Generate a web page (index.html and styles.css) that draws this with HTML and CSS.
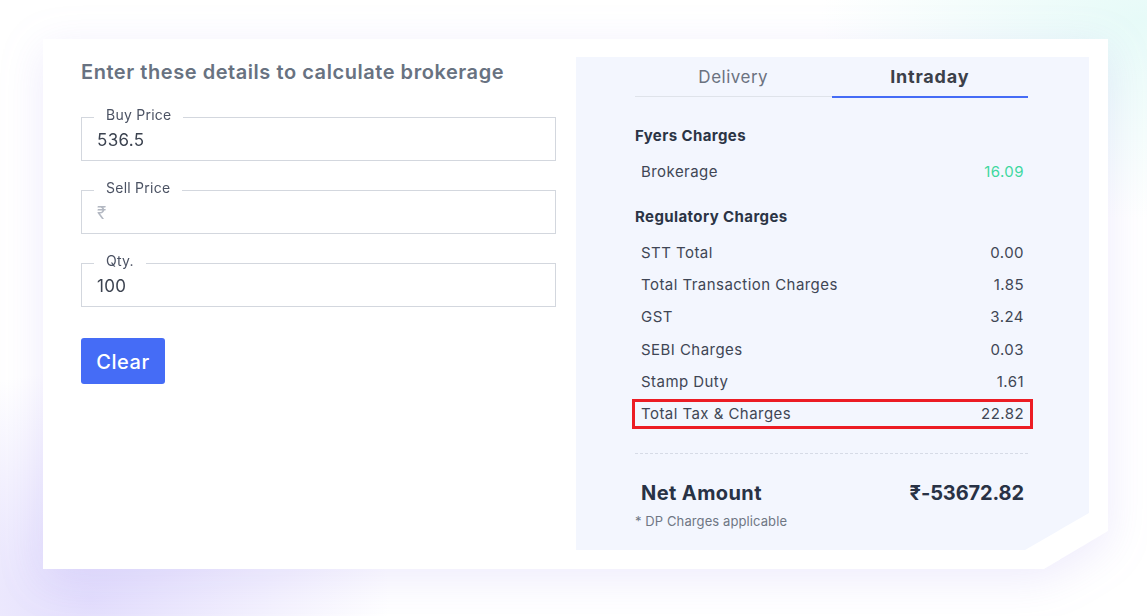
FILE: index.html
```html
<!DOCTYPE html>
<html lang="en">
<head>
<meta charset="utf-8">
<title>Brokerage Calculator</title>
<link rel="stylesheet" href="styles.css">
</head>
<body>
<div class="page">
  <div class="card-wrap">
    <div class="card">
      <section class="form-col">
        <h2 class="form-title">Enter these details to calculate brokerage</h2>
        <fieldset class="field">
          <legend>Buy Price</legend>
          <input class="field-input" type="text" value="536.5">
        </fieldset>
        <fieldset class="field">
          <legend>Sell Price</legend>
          <input class="field-input" type="text" placeholder="₹">
        </fieldset>
        <fieldset class="field">
          <legend>Qty.</legend>
          <input class="field-input" type="text" value="100">
        </fieldset>
        <button class="btn-clear" type="button">Clear</button>
      </section>
      <section class="panel">
        <div class="tabs">
          <div class="tab">Delivery</div>
          <div class="tab tab-active">Intraday</div>
        </div>
        <h3 class="group-title first">Fyers Charges</h3>
        <div class="row"><span>Brokerage</span><span class="val-green">16.09</span></div>
        <h3 class="group-title">Regulatory Charges</h3>
        <div class="row"><span>STT Total</span><span>0.00</span></div>
        <div class="row spaced"><span>Total Transaction Charges</span><span>1.85</span></div>
        <div class="row spaced"><span>GST</span><span>3.24</span></div>
        <div class="row spaced"><span>SEBI Charges</span><span>0.03</span></div>
        <div class="row spaced"><span>Stamp Duty</span><span>1.61</span></div>
        <div class="row spaced row-total"><span>Total Tax &amp; Charges</span><span>22.82</span></div>
        <div class="divider"></div>
        <div class="net"><span>Net Amount</span><span class="net-value">₹-53672.82</span></div>
        <p class="note">* DP Charges applicable</p>
      </section>
    </div>
  </div>
</div>
</body>
</html>
```

FILE: styles.css
```css
* { box-sizing: border-box; }

html, body {
  margin: 0;
  padding: 0;
}

body {
  width: 1147px;
  height: 616px;
  overflow: hidden;
  font-family: "Inter", "DejaVu Sans", sans-serif;
  background:
    radial-gradient(ellipse 300px 230px at 90px 600px, rgba(222, 216, 252, 0.85), rgba(222, 216, 252, 0) 100%),
    radial-gradient(ellipse 320px 200px at 1140px 20px, rgba(228, 250, 247, 0.9), rgba(228, 250, 247, 0) 100%),
    #ffffff;
}

.page {
  padding: 39px 0 0 43px;
}

.card-wrap {
  width: 1065px;
  filter: drop-shadow(0 10px 22px rgba(120, 100, 235, 0.13));
}

.card {
  width: 1065px;
  height: 530px;
  background: #ffffff;
  display: flex;
  gap: 20px;
  padding: 18px 19px 19px 38px;
  clip-path: polygon(0 0, 100% 0, 100% 492px, 1001px 100%, 0 100%);
}

/* ---------- left form ---------- */
.form-col {
  width: 475px;
  flex: none;
  display: flex;
  flex-direction: column;
  align-items: flex-start;
}

.form-title {
  margin: 0;
  height: 30px;
  line-height: 30px;
  font-size: 20px;
  font-weight: 600;
  color: #687281;
  letter-spacing: 0.55px;
}

.field {
  width: 475px;
  margin: 19px 0 0;
  padding: 0 15px 7px;
  border: 1px solid #d3d7de;
  border-radius: 0;
  min-width: 0;
}

.form-title + .field {
  margin-top: 20px;
}

.field legend {
  padding: 0 12px 4px;
  margin-left: -3px;
  font-size: 14px;
  line-height: 16px;
  letter-spacing: 0.25px;
  color: #4b5263;
}

.field-input {
  display: block;
  width: 100%;
  height: 26px;
  border: 0;
  outline: 0;
  padding: 0;
  background: transparent;
  font-family: inherit;
  font-size: 17px;
  letter-spacing: 0.3px;
  color: #3c4350;
}

.field-input::placeholder {
  color: #b3b8c2;
}

.btn-clear {
  margin-top: 31px;
  width: 84px;
  height: 46px;
  border: 0;
  border-radius: 3px;
  background: #456cf6;
  color: #ffffff;
  font-family: inherit;
  font-size: 20px;
  font-weight: 500;
  letter-spacing: 0.6px;
  padding: 2px 0 0;
}

/* ---------- right panel ---------- */
.panel {
  width: 513px;
  height: 493px;
  flex: none;
  background: #f3f6fe;
  padding: 0 61px 0 59px;
  clip-path: polygon(0 0, 100% 0, 100% 456px, 449px 100%, 0 100%);
}

.tabs {
  display: flex;
}

.tab {
  flex: 1;
  height: 40px;
  line-height: 40px;
  text-align: center;
  font-size: 17px;
  letter-spacing: 0.5px;
  color: #6b7280;
  border-bottom: 1px solid #dfe3ea;
}

.tab-active {
  height: 41px;
  font-size: 18px;
  font-weight: 700;
  letter-spacing: 0.8px;
  color: #3b4049;
  border-bottom: 2px solid #456cf6;
}

.group-title {
  margin: 28px 0 0;
  font-size: 15px;
  line-height: 20px;
  font-weight: 700;
  letter-spacing: 0.4px;
  color: #2b3445;
}

.row + .group-title {
  margin-top: 21px;
}

.row {
  display: flex;
  justify-content: space-between;
  align-items: center;
  height: 30px;
  margin: 10px -5px 0 -3px;
  padding: 0 7px;
  border: 2px solid transparent;
  font-size: 15px;
  letter-spacing: 0.45px;
  color: #3f4655;
}

.row.spaced {
  margin-top: 2.4px;
}

.row-total {
  border-color: #ec1c24;
  box-shadow: inset 0 0 0 1px #ec1c24;
}

.val-green {
  color: #3ed89f;
}

.divider {
  margin-top: 24px;
  border-top: 1px dashed #d6dbe6;
}

.net {
  display: flex;
  justify-content: space-between;
  margin: 25px 4px 0 6px;
  height: 28px;
  line-height: 28px;
  font-size: 20px;
  font-weight: 700;
  letter-spacing: 0.4px;
  color: #283245;
}

.net-value {
  letter-spacing: -0.1px;
}

.note {
  margin: 6px 0 0;
  font-size: 13px;
  line-height: 16px;
  letter-spacing: 0.1px;
  color: #6f7684;
}
```
